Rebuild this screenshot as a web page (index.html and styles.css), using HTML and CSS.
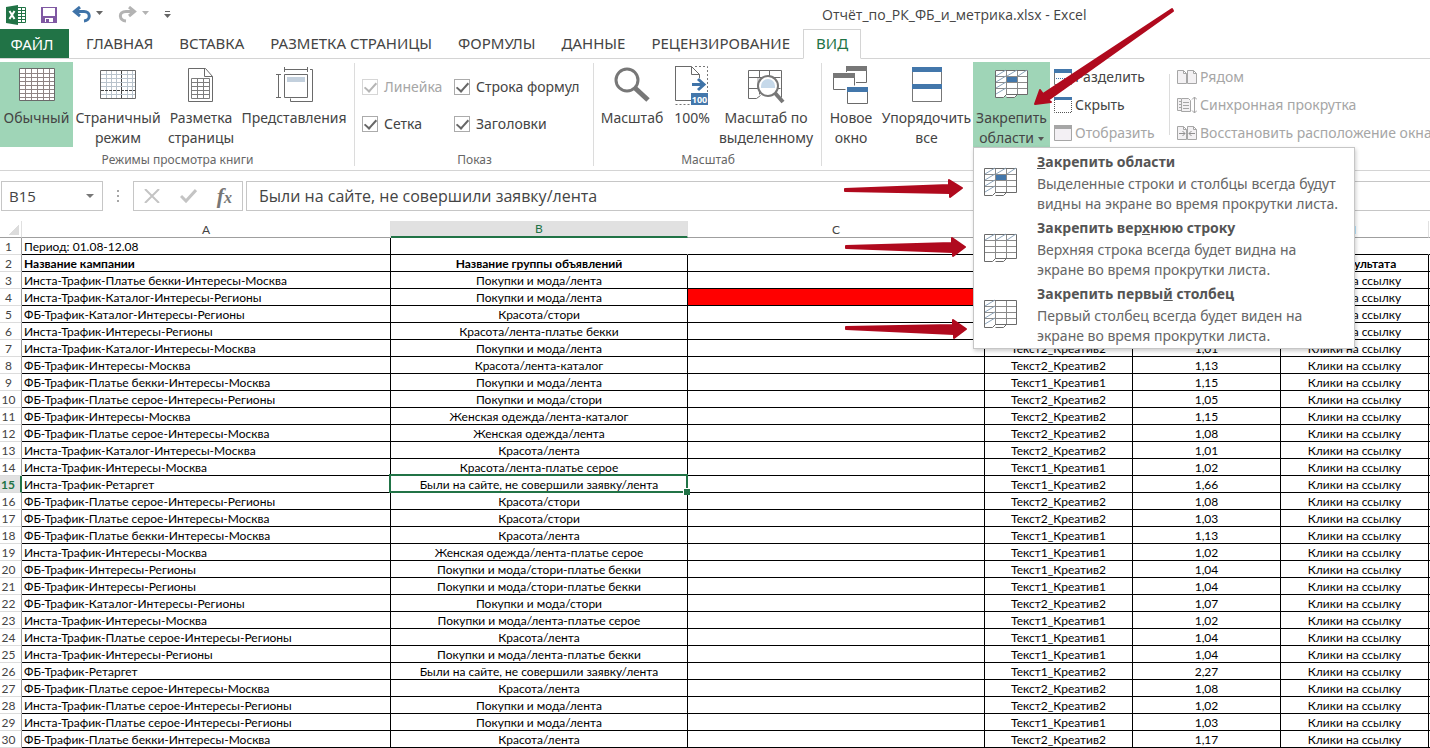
FILE: index.html
```html
<!DOCTYPE html>
<html lang="ru">
<head>
<meta charset="utf-8">
<title>Отчёт_по_РК_ФБ_и_метрика.xlsx - Excel</title>
<link rel="stylesheet" href="styles.css">
</head>
<body>
<svg class="defs" aria-hidden="true">
  <symbol id="sheet" viewBox="0 0 35 30">
    <path fill="#fff" d="M1 1h33v24.500h-10l-3 3h-8l-1-2-2 2H1z"/>
    <path fill="none" stroke="#8a8a8a" d="M1.500 7.500h32M1.500 13.500h32M1.500 19.500h32M12.500 1v25M23.500 1v24" stroke-width="1"/>
    <path fill="none" stroke="#6a6a6a" d="M33.500 25.500V1.500h-32v27h8l3-3h21M12.500 28.500h8l3-3"/>
  </symbol>
  <symbol id="page" viewBox="0 0 10 14"><path fill="#f3f1f3" stroke="#a6a6a6" d="M.5.5h6l3 3v10h-9zM6.500.5v3h3"/></symbol>
</svg>

<div class="app">
  <header class="titlebar">
    <div class="quick">
      <svg class="logo" width="20" height="20" viewBox="0 0 20 20" role="img" aria-label="Excel"><path fill="#fff" stroke="#217346" d="M11 2.500h8.500v15H11M11 5.500h8M11 8.500h8M11 11.500h8M11 14.500h8M15.500 3v14"/><path fill="#217346" d="M0 2l12-2v20L0 18z"/><path d="M3.500 6l5 8M8.500 6l-5 8" stroke="#fff" stroke-width="2"/></svg>
      <button class="icon-btn save" aria-label="Сохранить"><svg width="16" height="16" viewBox="0 0 16 16"><path fill="#8059a3" d="M0 0h16v16H0z"/><path fill="#fff" d="M2 1h12v8H2zM4 11h8v4H4z"/><path fill="#8059a3" d="M5 12h3v3H5z"/></svg></button>
      <button class="icon-btn" aria-label="Отменить"><svg width="31" height="17" viewBox="0 0 31 17"><path fill="none" stroke="#3f73a8" stroke-width="3" d="M4 5.500h8c7 0 7 9 0 9.500"/><path fill="none" stroke="#3f73a8" stroke-width="3" d="M8 1L2.500 5.500 8 10"/><path fill="#666" d="M24 5h7l-3.500 4z"/></svg></button>
      <button class="icon-btn" aria-label="Вернуть"><svg width="31" height="17" viewBox="0 0 31 17"><path fill="none" stroke="#b3b3b3" stroke-width="3" d="M14 5.500H8c-8 0-7 9 0 9.500M11 1l5.500 4.500L11 10"/><path fill="#b3b3b3" d="M24 5h7l-3.500 4z"/></svg></button>
      <button class="icon-btn" aria-label="Настройка панели"><svg width="7" height="8" viewBox="0 0 7 8"><path fill="#666" d="M1 0h5v1H1zM0 3h7L3.500 7z"/></svg></button>
    </div>
    <h1 class="title">Отчёт_по_РК_ФБ_и_метрика.xlsx - Excel</h1>
  </header>

  <nav class="tabs">
    <button class="tab file">ФАЙЛ</button>
    <button class="tab">ГЛАВНАЯ</button>
    <button class="tab">ВСТАВКА</button>
    <button class="tab">РАЗМЕТКА СТРАНИЦЫ</button>
    <button class="tab">ФОРМУЛЫ</button>
    <button class="tab">ДАННЫЕ</button>
    <button class="tab">РЕЦЕНЗИРОВАНИЕ</button>
    <button class="tab active">ВИД</button>
  </nav>

  <div class="ribbon">
    <section class="group g-modes">
      <div class="tools">
        <button class="big on"><svg width="38" height="40" viewBox="0 0 38 40"><path fill="#fff" stroke="#6a6a6a" d="M1.500 2.500h35v32h-35z"/><path fill="none" stroke="#8f8484" d="M2 7.500h34M2 11.500h34M2 15.500h34M2 19.500h34M2 23.500h34M2 27.500h34M2 31.500h34M7.500 3v31M13.500 3v31M19.500 3v31M25.500 3v31M31.500 3v31"/></svg><span>Обычный</span></button>
        <button class="big"><svg width="38" height="40" viewBox="0 0 38 40"><path fill="none" stroke="#b9c3cc" d="M2 8.500h34M2 12.500h34M2 16.500h34M2 20.500h34M2 28.500h34M7.500 5v27M12.500 5v27M17.500 5v27M28.500 5v27M33.500 5v27"/><path fill="none" stroke="#444" stroke-dasharray="3 1" d="M2 24.500h34M22.500 5v27"/><path fill="none" stroke="#6a6a6a" d="M1.500 4.500h35v28h-35z"/></svg><span>Страничный<br>режим</span></button>
        <button class="big b76"><svg width="26" height="40" viewBox="0 0 26 40"><path fill="#fff" stroke="#6a6a6a" d="M.5 2.500h17l7 8v25H.5zM16.500 2.500v8h8"/><path fill="none" stroke="#7d7d7d" d="M3.500 12.500h18v20h-18zM3.500 16.500h18M3.500 20.500h18M3.500 24.500h18M3.500 28.500h18M9.500 12.500v20M15.500 12.500v20"/></svg><span>Разметка<br>страницы</span></button>
        <button class="big b110"><svg width="38" height="40" viewBox="0 0 38 40"><path fill="none" stroke="#6a6a6a" d="M9.500 1v5M32.500 1v5M10 3.500h22M1 8.500h5M1 31.500h5M3.500 9v22M35 3.500h2.500v32h-22v-3M9.500 8.500h23v23h-23z"/><path fill="#c3d0dd" d="M12 11h18v5H12z"/></svg><span>Представления</span></button>
      </div>
      <h2 class="caption">Режимы просмотра книги</h2>
    </section>

    <section class="group g-show">
      <div class="checks">
        <label class="off"><input type="checkbox" checked disabled>Линейка</label>
        <label><input type="checkbox" checked>Строка формул</label>
        <label><input type="checkbox" checked>Сетка</label>
        <label><input type="checkbox" checked>Заголовки</label>
      </div>
      <h2 class="caption">Показ</h2>
    </section>

    <section class="group g-zoom">
      <div class="tools">
        <button class="big b76"><svg width="36" height="40" viewBox="0 0 36 40"><circle cx="13" cy="14" r="11" fill="#fff" stroke="#777" stroke-width="3"/><path stroke="#777" stroke-width="5" d="M21 22l13 12"/></svg><span>Масштаб</span></button>
        <button class="big b44"><svg width="34" height="40" viewBox="0 0 34 40"><path fill="#fff" stroke="#6a6a6a" d="M16 34.500H.5V-.5M.5.500h16l8 8V12M16.500.500v8h8"/><path fill="none" stroke="#777" stroke-dasharray="2 2" d="M20 .5h12.500V27M.5 38.500H16"/><path fill="none" stroke="#3f73a8" stroke-width="3" d="M17 18.500h12M23 13l6 5.500-6 5.500"/><path fill="#4377ab" d="M16 27h17v12H16z"/><text x="24.500" y="37" text-anchor="middle" class="badge">100</text></svg><span>100%</span></button>
        <button class="big b104"><svg width="38" height="40" viewBox="0 0 38 40"><path fill="none" stroke="#6a6a6a" d="M1.500 4.500h33v27M1.500 4.500v28h8l4-3M1.500 11.500h32M1.500 22.500h32M12.500 4.500v24M22.500 4.500v25"/><path fill="#d0cfcf" d="M10 12h8v10h-8z"/><circle cx="21" cy="20" r="10" fill="#fff" stroke="#777" stroke-width="2"/><path fill="#c6d9ea" d="M14 20a7 7 0 0114 0v2H14z"/><path stroke="#777" stroke-width="4" d="M28 27l8 9"/></svg><span>Масштаб по<br>выделенному</span></button>
      </div>
      <h2 class="caption">Масштаб</h2>
    </section>

    <section class="group g-window">
      <div class="tools">
        <button class="big b58"><svg width="36" height="40" viewBox="0 0 36 40"><g fill="#fff" stroke="#6a6a6a"><path d="M13.500.500h20v16h-20z"/><path stroke="#fff" stroke-width="3" d="M.5 7.500h21v16H.5z"/><path d="M.5 7.500h21v16H.5z"/><path stroke="#fff" stroke-width="4" d="M14.500 21.500h20v16h-20z"/><path d="M14.500 21.500h20v16h-20z"/></g><path fill="#777" d="M13 0h21v5H13zM0 7h22v5H0z"/><path fill="#4377ab" d="M14 21h21v5H14z"/></svg><span>Новое<br>окно</span></button>
        <button class="big b88"><svg width="30" height="40" viewBox="0 0 30 40"><path fill="#fff" stroke="#777" d="M.5 1.500h29v34H.5z"/><path fill="#4377ab" d="M0 1h30v5H0zM0 18h30v5H0z"/></svg><span>Упорядочить<br>все</span></button>
        <div class="freeze">
          <button class="big on b77" aria-expanded="true"><svg width="35" height="40" viewBox="0 0 35 40"><use href="#sheet" y="3" width="35" height="30"/><path stroke="#8aa3ba" d="M2 10l10-6M13 10l10-6M24 10l9-6M2 16l10-6M2 22l10-6M2 28l10-6"/><path fill="#4377ab" d="M13 11h10v5H13z"/></svg><span>Закрепить<br>области <i class="caret"></i></span></button>
          <div class="menu" role="menu">
            <button class="item" role="menuitem"><svg width="35" height="30" viewBox="0 0 35 30"><use href="#sheet" width="35" height="30"/><path stroke="#8aa3ba" d="M2 7l10-6M13 7l10-6M24 7l9-6M2 13l10-6M2 19l10-6M2 25l10-6"/><path fill="#4377ab" d="M13 8h10v5H13z"/></svg><span><b><u>З</u>акрепить области</b>Выделенные строки и столбцы всегда будут<br>видны на экране во время прокрутки листа.</span></button>
            <button class="item" role="menuitem"><svg width="35" height="30" viewBox="0 0 35 30"><use href="#sheet" width="35" height="30"/><path stroke="#8aa3ba" d="M2 7l10-6M13 7l10-6M24 7l9-6"/></svg><span><b>Закрепить вер<u>х</u>нюю строку</b>Верхняя строка всегда будет видна на<br>экране во время прокрутки листа.</span></button>
            <button class="item" role="menuitem"><svg width="35" height="30" viewBox="0 0 35 30"><use href="#sheet" width="35" height="30"/><path stroke="#8aa3ba" d="M2 7l10-6M2 13l10-6M2 19l10-6M2 25l10-6"/></svg><span><b>Закрепить первы<u>й</u> столбец</b>Первый столбец всегда будет виден на<br>экране во время прокрутки листа.</span></button>
          </div>
        </div>
        <div class="stack split">
          <button class="small"><svg width="18" height="16" viewBox="0 0 18 16"><path fill="#fff" stroke="#777" d="M.5.500h17v15H.5z"/><path fill="#4377ab" d="M0 0h18v4H0z"/><path stroke="#4377ab" stroke-dasharray="1 1" d="M2 9.500h14"/></svg>Разделить</button>
          <button class="small"><svg width="18" height="16" viewBox="0 0 18 16"><path fill="none" stroke="#555" stroke-dasharray="1 1" d="M.5 3v12.500h17V3"/><path fill="#4377ab" d="M0 0h18v3H0z"/></svg>Скрыть</button>
          <button class="small" disabled><svg width="18" height="16" viewBox="0 0 18 16"><path fill="#f3f0f4" stroke="#a6a6a6" d="M.5.500h17v15H.5z"/><path fill="#a6a6a6" d="M0 0h18v4H0z"/></svg>Отобразить</button>
        </div>
        <div class="stack">
          <button class="small" disabled><svg width="20" height="18" viewBox="0 0 20 18"><use href="#page" y="2" width="10" height="14"/><use href="#page" x="10" y="2" width="10" height="14"/></svg>Рядом</button>
          <button class="small" disabled><svg width="20" height="18" viewBox="0 0 20 18"><path fill="#f3f1f3" stroke="#a6a6a6" d="M4 2.500H.5v12H4M4.500 2.500h7l2 2v11h-9zM2 5.500h2M2 8.500h2M2 11.500h2M6 6.500h6M6 9.500h6M6 12.500h6M17.500 1v16M15 3.500L17.500 1 20 3.500M15 14.500l2.500 2.500 2.500-2.500"/></svg>Синхронная прокрутка</button>
          <button class="small" disabled><svg width="20" height="18" viewBox="0 0 20 18"><use href="#page" y="2" width="10" height="14"/><use href="#page" x="10" y="2" width="10" height="14"/><path fill="none" stroke="#8f8f8f" d="M2 9.500h6M5.500 7L8 9.500 5.500 12M18 9.500h-6M14.500 7L12 9.500l2.500 2.500"/></svg>Восстановить расположение окна</button>
        </div>
      </div>
    </section>
  </div>

  <div class="formula-bar">
    <div class="namebox"><input aria-label="Имя" value="B15"><button class="icon-btn" aria-label="Список имён"><i class="caret"></i></button></div>
    <svg class="grip" width="3" height="12" viewBox="0 0 3 12"><path fill="#a6a6a6" d="M0 0h2v2H0zM0 5h2v2H0zM0 10h2v2H0z"/></svg>
    <div class="fx">
      <button class="icon-btn" aria-label="Отмена"><svg width="16" height="14" viewBox="0 0 16 14"><path stroke="#c4c4c4" stroke-width="2" d="M1 0l14 14M15 0L1 14"/></svg></button>
      <button class="icon-btn" aria-label="Ввод"><svg width="17" height="14" viewBox="0 0 17 14"><path fill="none" stroke="#c4c4c4" stroke-width="3" d="M1 7l5 5L16 1"/></svg></button>
      <button class="icon-btn fn" aria-label="Вставить функцию">f<small>x</small></button>
    </div>
    <input class="formula" aria-label="Строка формул" value="Были на сайте, не совершили заявку/лента">
  </div>

  <table class="grid">
    <colgroup><col class="c-n"><col class="c-a"><col class="c-b"><col class="c-c"><col class="c-d"><col class="c-d"><col><col class="c-end"></colgroup>
    <thead><tr><th class="corner"></th><th>A</th><th class="sel">B</th><th>C</th><th></th><th></th><th>I</th><th></th></tr></thead>
    <tbody>
      <tr class="open"><th>1</th><td>Период: 01.08-12.08</td><td></td><td></td><td></td><td></td><td></td><td></td></tr>
      <tr class="names"><th>2</th><td>Название кампании</td><td>Название группы объявлений</td><td></td><td></td><td></td><td>Тип результата</td><td></td></tr>
      <tr><th>3</th><td>Инста-Трафик-Платье бекки-Интересы-Москва</td><td>Покупки и мода/лента</td><td></td><td></td><td></td><td>Клики на ссылку</td><td></td></tr>
      <tr><th>4</th><td>Инста-Трафик-Каталог-Интересы-Регионы</td><td>Покупки и мода/лента</td><td class="red"></td><td></td><td></td><td>Клики на ссылку</td><td></td></tr>
      <tr><th>5</th><td>ФБ-Трафик-Каталог-Интересы-Регионы</td><td>Красота/стори</td><td></td><td></td><td></td><td>Клики на ссылку</td><td></td></tr>
      <tr><th>6</th><td>Инста-Трафик-Интересы-Регионы</td><td>Красота/лента-платье бекки</td><td></td><td></td><td></td><td>Клики на ссылку</td><td></td></tr>
      <tr><th>7</th><td>Инста-Трафик-Каталог-Интересы-Москва</td><td>Покупки и мода/лента</td><td></td><td>Текст2_Креатив2</td><td>1,01</td><td>Клики на ссылку</td><td></td></tr>
      <tr><th>8</th><td>ФБ-Трафик-Интересы-Москва</td><td>Красота/лента-каталог</td><td></td><td>Текст2_Креатив2</td><td>1,13</td><td>Клики на ссылку</td><td></td></tr>
      <tr><th>9</th><td>ФБ-Трафик-Платье бекки-Интересы-Москва</td><td>Покупки и мода/лента</td><td></td><td>Текст1_Креатив1</td><td>1,15</td><td>Клики на ссылку</td><td></td></tr>
      <tr><th>10</th><td>ФБ-Трафик-Платье серое-Интересы-Регионы</td><td>Покупки и мода/стори</td><td></td><td>Текст2_Креатив2</td><td>1,05</td><td>Клики на ссылку</td><td></td></tr>
      <tr><th>11</th><td>ФБ-Трафик-Интересы-Москва</td><td>Женская одежда/лента-каталог</td><td></td><td>Текст2_Креатив2</td><td>1,15</td><td>Клики на ссылку</td><td></td></tr>
      <tr><th>12</th><td>ФБ-Трафик-Платье серое-Интересы-Москва</td><td>Женская одежда/лента</td><td></td><td>Текст2_Креатив2</td><td>1,08</td><td>Клики на ссылку</td><td></td></tr>
      <tr><th>13</th><td>Инста-Трафик-Каталог-Интересы-Москва</td><td>Красота/лента</td><td></td><td>Текст2_Креатив2</td><td>1,01</td><td>Клики на ссылку</td><td></td></tr>
      <tr><th>14</th><td>Инста-Трафик-Интересы-Москва</td><td>Красота/лента-платье серое</td><td></td><td>Текст1_Креатив1</td><td>1,02</td><td>Клики на ссылку</td><td></td></tr>
      <tr><th class="sel">15</th><td>Инста-Трафик-Ретаргет</td><td class="cursor">Были на сайте, не совершили заявку/лента</td><td></td><td>Текст1_Креатив2</td><td>1,66</td><td>Клики на ссылку</td><td></td></tr>
      <tr><th>16</th><td>ФБ-Трафик-Платье серое-Интересы-Регионы</td><td>Красота/стори</td><td></td><td>Текст2_Креатив2</td><td>1,08</td><td>Клики на ссылку</td><td></td></tr>
      <tr><th>17</th><td>ФБ-Трафик-Платье серое-Интересы-Москва</td><td>Красота/стори</td><td></td><td>Текст2_Креатив2</td><td>1,03</td><td>Клики на ссылку</td><td></td></tr>
      <tr><th>18</th><td>ФБ-Трафик-Платье бекки-Интересы-Москва</td><td>Красота/лента</td><td></td><td>Текст1_Креатив1</td><td>1,13</td><td>Клики на ссылку</td><td></td></tr>
      <tr><th>19</th><td>Инста-Трафик-Интересы-Москва</td><td>Женская одежда/лента-платье серое</td><td></td><td>Текст1_Креатив1</td><td>1,02</td><td>Клики на ссылку</td><td></td></tr>
      <tr><th>20</th><td>ФБ-Трафик-Интересы-Регионы</td><td>Покупки и мода/стори-платье бекки</td><td></td><td>Текст1_Креатив2</td><td>1,04</td><td>Клики на ссылку</td><td></td></tr>
      <tr><th>21</th><td>ФБ-Трафик-Интересы-Регионы</td><td>Покупки и мода/стори-платье бекки</td><td></td><td>Текст1_Креатив1</td><td>1,04</td><td>Клики на ссылку</td><td></td></tr>
      <tr><th>22</th><td>ФБ-Трафик-Каталог-Интересы-Регионы</td><td>Покупки и мода/стори</td><td></td><td>Текст2_Креатив2</td><td>1,07</td><td>Клики на ссылку</td><td></td></tr>
      <tr><th>23</th><td>Инста-Трафик-Интересы-Москва</td><td>Покупки и мода/лента-платье серое</td><td></td><td>Текст1_Креатив1</td><td>1,02</td><td>Клики на ссылку</td><td></td></tr>
      <tr><th>24</th><td>Инста-Трафик-Платье серое-Интересы-Регионы</td><td>Красота/лента</td><td></td><td>Текст1_Креатив1</td><td>1,04</td><td>Клики на ссылку</td><td></td></tr>
      <tr><th>25</th><td>Инста-Трафик-Интересы-Регионы</td><td>Покупки и мода/лента-платье бекки</td><td></td><td>Текст1_Креатив1</td><td>1,04</td><td>Клики на ссылку</td><td></td></tr>
      <tr><th>26</th><td>ФБ-Трафик-Ретаргет</td><td>Были на сайте, не совершили заявку/лента</td><td></td><td>Текст1_Креатив2</td><td>2,27</td><td>Клики на ссылку</td><td></td></tr>
      <tr><th>27</th><td>ФБ-Трафик-Платье серое-Интересы-Москва</td><td>Красота/лента</td><td></td><td>Текст2_Креатив2</td><td>1,08</td><td>Клики на ссылку</td><td></td></tr>
      <tr><th>28</th><td>Инста-Трафик-Платье серое-Интересы-Регионы</td><td>Покупки и мода/лента</td><td></td><td>Текст2_Креатив2</td><td>1,02</td><td>Клики на ссылку</td><td></td></tr>
      <tr><th>29</th><td>Инста-Трафик-Платье серое-Интересы-Регионы</td><td>Покупки и мода/лента</td><td></td><td>Текст1_Креатив1</td><td>1,03</td><td>Клики на ссылку</td><td></td></tr>
      <tr><th>30</th><td>ФБ-Трафик-Платье бекки-Интересы-Москва</td><td>Красота/лента</td><td></td><td>Текст2_Креатив2</td><td>1,17</td><td>Клики на ссылку</td><td></td></tr>
    </tbody>
  </table>

  <svg class="arrows" width="340" height="345" viewBox="840 0 340 345" aria-hidden="true">
    <g fill="#b00a1e" stroke="#b00a1e" stroke-width="2" stroke-linejoin="round">
      <path d="M1172 9l1 2-125 89 3 2-16 2 5-14 3 4z"/>
      <path d="M845 189l104-4v-5l13 8-12 9v-4l-105-2z"/>
      <path d="M846 246l106-3v-5l13 9-12 9v-4l-107-4z"/>
      <path d="M846 327l107-2v-5l13 9-12 9v-4l-108-5z"/>
    </g>
  </svg>
</div>
</body>
</html>
```
FILE: styles.css
```css
* { box-sizing: border-box; }
body { margin: 0; background: #fff; color: #444; font: 14px/20px "Noto Sans", "Open Sans", sans-serif; }
button, input { font: inherit; color: inherit; margin: 0; padding: 0; border: 0; background: none; }
button:disabled { color: #a6a6a6; }
svg { display: block; flex: none; }
.defs { position: absolute; width: 0; height: 0; }
.app { position: relative; min-height: 100vh; overflow: hidden; }

.titlebar { display: flex; align-items: center; height: 29px; }
.quick { display: flex; align-items: center; gap: 15px; flex: 1; padding: 0 6px; height: 26px; }
.icon-btn { display: flex; align-items: center; justify-content: center; }
.title { flex: none; width: 608px; margin: 0; font-family: "Open Sans", sans-serif; font-size: 14px; font-weight: 400; }

.tabs { display: flex; height: 30px; border-bottom: 1px solid #d4d4d4; font-size: 15px; }
.tab { padding: 0 13px 2px; }
.tab.file { width: 69px; margin-right: 4px; padding: 0 5px 0 0; background: #217346; color: #fff; }
.tab.active { height: 30px; padding: 0 12px 2px; border: 1px solid #d4d4d4; border-bottom-color: #fff; background: #fff; color: #217346; }

.ribbon { display: flex; height: 112px; padding-top: 3px; border-bottom: 1px solid #d4d4d4; white-space: nowrap; }
.group { display: flex; flex-direction: column; flex: none; position: relative; }
.group:not(:last-child)::after { content: ""; position: absolute; right: 0; top: 1px; bottom: 4px; border-right: 1px solid #dcdcdc; }
.g-modes { width: 355px; }
.g-show { width: 239px; }
.g-zoom { width: 228px; }
.tools { display: flex; height: 88px; }
.caption { margin: 0; font-size: 12px; line-height: 20px; font-weight: 400; text-align: center; color: #666; }
.big { display: flex; flex-direction: column; align-items: center; gap: 2px; flex: none; width: 73px; height: 85px; padding-top: 4px; }
.big span { text-align: center; }
.g-modes .big:nth-child(2) { width: 90px; }
.big.b44 { width: 44px; }
.big.b58 { width: 58px; }
.big.b76 { width: 76px; }
.big.b77 { width: 77px; }
.big.b88 { width: 93px; }
.big.b104 { width: 104px; }
.big.b110 { width: 110px; }
.big.on { background: #9fd5b7; }
.badge { font: bold 9px "Open Sans", sans-serif; fill: #fff; }
.caret { display: inline-block; border: 3px solid transparent; border-top: 4px solid #555; border-bottom: 0; vertical-align: middle; }

.checks { display: grid; grid-template-columns: 92px 1fr; grid-auto-rows: 37px; height: 88px; padding: 6px 0 0 7px; }
.checks label { display: flex; align-items: center; gap: 6px; }
.checks .off { color: #a6a6a6; }
.checks input { display: grid; place-items: center; appearance: none; width: 16px; height: 16px; border: 1px solid #ababab; background: #fff; }
.checks input::before { content: ""; width: 5px; height: 10px; margin-bottom: 2px; border: solid #666; border-width: 0 2px 2px 0; transform: rotate(42deg); }
.checks input:disabled { border-color: #d6d6d6; }
.checks input:disabled::before { border-color: #b5b5b5; }

.freeze { position: relative; }
.menu { position: absolute; z-index: 2; top: 85px; left: 0; width: 382px; padding: 4px 0 0; border: 1px solid #c6c6c6; background: #fff; box-shadow: 1px 2px 4px #0003; color: #666; }
.item { display: flex; gap: 19px; width: 100%; height: 66px; padding-left: 9px; text-align: left; }
.item:last-child { height: 64px; }
.item svg { margin-top: 15px; }
.item b { display: block; margin-bottom: 2px; color: #555; font-weight: 700; }

.stack { display: flex; flex-direction: column; flex: none; padding: 1px 0 0 7px; height: 85px; }
.stack.split { position: relative; width: 120px; padding-left: 4px; }
.stack.split::after { content: ""; position: absolute; right: 0; top: 12px; bottom: 12px; border-right: 1px solid #dcdcdc; }
.small { display: flex; align-items: center; gap: 3px; height: 28px; }

.formula-bar { display: flex; align-items: center; padding: 10px 0 10px 1px; font-family: "Open Sans", sans-serif; font-size: 16px; }
.namebox, .fx, .formula { display: flex; align-items: center; height: 30px; border: 1px solid #c6c6c6; }
.namebox { width: 102px; padding-right: 8px; justify-content: space-between; }
.namebox input { width: 70px; padding-left: 7px; font-size: 15px; }
.namebox .caret { border-width: 4px 4px 0; border-top-color: #777; }
.grip { margin: 0 13px 0 14px; }
.fx { width: 110px; justify-content: space-between; padding: 0 10px; }
.fn { font: italic bold 22px/24px "Liberation Serif", serif; color: #777; }
.fn small { font-size: 16px; align-self: flex-end; line-height: 20px; }
.formula { flex: 1; min-width: 0; margin-left: 3px; padding-left: 12px; border-right: 0; }

.grid { width: 100%; table-layout: fixed; border-collapse: separate; border-spacing: 0; font: 12px/14px Lato, "Open Sans", sans-serif; color: #000; white-space: nowrap; }
.c-n { width: 22px; }
.c-a { width: 369px; }
.c-b { width: 297px; }
.c-c { width: 297px; }
.c-d { width: 148px; }
.c-end { width: 1px; }
.grid th, .grid td { height: 17px; padding: 2px 0 0; text-align: center; }
.grid th { font-weight: 400; color: #444; }
.grid thead th { border-right: 1px solid #e0e0e0; border-bottom: 1px solid #9f9f9f; }
.grid thead th.sel { padding-top: 1px; background: #e1e1e1; color: #217346; border-bottom: 2px solid #217346; }
.grid .corner { background: linear-gradient(135deg, #fff 50%, #dcdcdc 50%) no-repeat 8px 3px / 11px 11px; }
.grid tbody th { border-right: 1px solid #9f9f9f; border-bottom: 1px solid #dcdcdc; padding-right: 4px; }
.grid tbody th.sel { background: #e1e1e1; color: #217346; font-weight: 700; border-right: 2px solid #217346; }
.grid td { border-right: 1px solid #000; border-bottom: 1px solid #000; }
.grid td:last-child, .grid th:last-child { border-right: 0; }
.grid td:nth-child(2) { padding-left: 2px; text-align: left; }
.open td:not(:nth-child(2)) { border-right-color: transparent; }
.names td { font-weight: 700; }
.grid .red { background: #f00; }
.cursor { position: relative; }
.cursor::before { content: ""; position: absolute; inset: -2px -1px -1px -2px; border: 2px solid #217346; }
.cursor::after { content: ""; position: absolute; right: -3px; bottom: -3px; width: 6px; height: 6px; border: solid #fff; border-width: 1px 0 0 1px; background: #217346; }

.arrows { position: absolute; z-index: 3; left: 840px; top: 0; pointer-events: none; }
```
